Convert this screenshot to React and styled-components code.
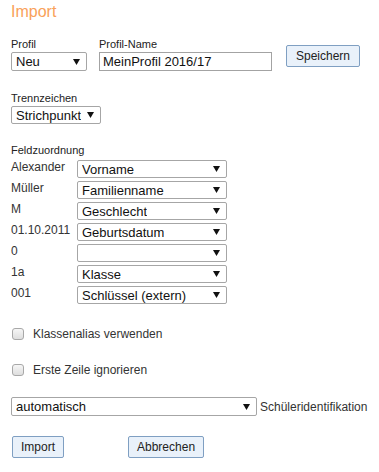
import styled, { createGlobalStyle } from "styled-components";

const GlobalStyle = createGlobalStyle`
  body {
    margin: 0;
    background: #fff;
    font-family: "Liberation Sans", Arial, sans-serif;
    color: #333;
  }
`;

const Page = styled.div`
  padding: 2px 0 0 11px;
`;

const Title = styled.h1`
  margin: 0 0 16px;
  font-size: 16px;
  line-height: 20px;
  font-weight: normal;
  color: #f9a15a;
`;

const Label = styled.div`
  font-size: 11px;
  line-height: 13px;
  color: #222;
  margin-bottom: 1px;
`;

const TopRow = styled.div`
  display: flex;
  align-items: center;
  gap: 12px;
`;

const Group = styled.div`
  display: flex;
  flex-direction: column;
`;

const Section = styled.div`
  margin-top: ${(p) => p.$top || 0}px;
`;

const SelectBox = styled.div`
  box-sizing: border-box;
  width: ${(p) => p.$width}px;
  height: ${(p) => p.$height || 18}px;
  display: flex;
  align-items: center;
  justify-content: space-between;
  padding: 0 6px 0 4px;
  border: 1px solid #a6a6a6;
  border-radius: 2px;
  background: #fff;
  font-size: 13px;
  color: #111;
`;

const SelectText = styled.span`
  white-space: nowrap;
  overflow: hidden;
`;

const TextInput = styled.input`
  box-sizing: border-box;
  width: 173px;
  height: 19px;
  margin: 0;
  padding: 0 3px;
  border: 1px solid #a3a3a3;
  font-family: inherit;
  font-size: 13px;
  color: #111;
  outline: none;
`;

const Button = styled.button`
  box-sizing: border-box;
  height: 22px;
  padding: 0 8px;
  margin: 0;
  border: 1px solid #7f9fc2;
  border-radius: 2px;
  background: #e9f1fa;
  font-family: inherit;
  font-size: 12px;
  color: #222;
`;

const SaveButton = styled(Button)`
  margin: 3px 0 0 2px;
  padding: 0 9px;
`;

const MappingList = styled.div`
  display: grid;
  grid-template-columns: 66px 150px;
  row-gap: 3px;
  margin-top: 3px;
`;

const SourceValue = styled.div`
  font-size: 12px;
  line-height: 14px;
  color: #333;
`;

const CheckRow = styled.label`
  display: flex;
  align-items: center;
  gap: 9px;
  margin-top: ${(p) => p.$top}px;
  font-size: 12px;
  color: #333;
  padding-left: 1px;
`;

const CheckBox = styled.span`
  box-sizing: border-box;
  width: 12px;
  height: 12px;
  border: 1px solid #a8a8a8;
  border-radius: 3px;
  background: linear-gradient(#f6f6f6, #dedede);
`;

const IdentRow = styled.div`
  display: flex;
  align-items: center;
  gap: 3px;
  margin-top: 20px;
  font-size: 12px;
  color: #333;
`;

const ButtonRow = styled.div`
  display: flex;
  gap: 64px;
  margin-top: 20px;
  padding-left: 1px;
`;

const Arrow = () => (
  <svg width="7" height="6" viewBox="0 0 7 6">
    <polygon points="0,0 7,0 3.5,6" fill="#111" />
  </svg>
);

const Select = ({ value, width, height }) => (
  <SelectBox $width={width} $height={height}>
    <SelectText>{value}</SelectText>
    <Arrow />
  </SelectBox>
);

const mapping = [
  ["Alexander", "Vorname"],
  ["Müller", "Familienname"],
  ["M", "Geschlecht"],
  ["01.10.2011", "Geburtsdatum"],
  ["0", ""],
  ["1a", "Klasse"],
  ["001", "Schlüssel (extern)"],
];

const App = () => {
  return (
    <Page>
      <GlobalStyle />
      <Title>Import</Title>

      <TopRow>
        <Group>
          <Label>Profil</Label>
          <Select value="Neu" width={76} height={19} />
        </Group>
        <Group>
          <Label>Profil-Name</Label>
          <TextInput defaultValue="MeinProfil 2016/17" />
        </Group>
        <SaveButton>Speichern</SaveButton>
      </TopRow>

      <Section $top={21}>
        <Label>Trennzeichen</Label>
        <Select value="Strichpunkt" width={90} />
      </Section>

      <Section $top={20}>
        <Label>Feldzuordnung</Label>
        <MappingList>
          {mapping.map(([src, field]) => (
            <>
              <SourceValue key={src + "l"}>{src}</SourceValue>
              <Select key={src + "s"} value={field} width={150} />
            </>
          ))}
        </MappingList>
      </Section>

      <CheckRow $top={23}>
        <CheckBox />
        Klassenalias verwenden
      </CheckRow>
      <CheckRow $top={22}>
        <CheckBox />
        Erste Zeile ignorieren
      </CheckRow>

      <IdentRow>
        <Select value="automatisch" width={246} height={19} />
        Schüleridentifikation
      </IdentRow>

      <ButtonRow>
        <Button>Import</Button>
        <Button>Abbrechen</Button>
      </ButtonRow>
    </Page>
  );
};

export default App;
